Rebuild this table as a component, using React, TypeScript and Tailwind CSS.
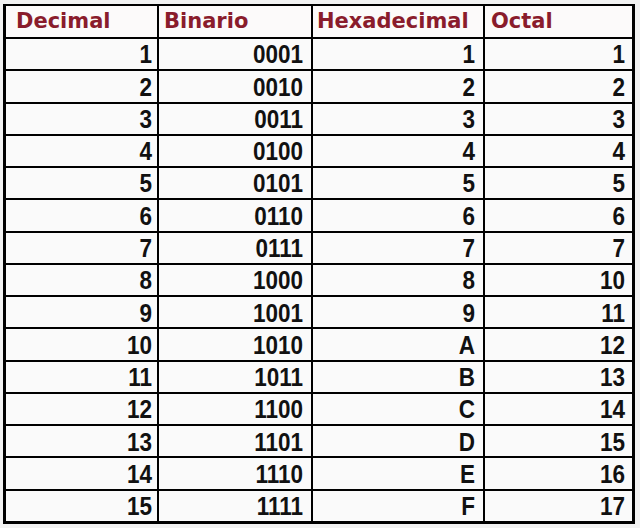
import React from "react";

const rows = [
  ["1", "0001", "1", "1"],
  ["2", "0010", "2", "2"],
  ["3", "0011", "3", "3"],
  ["4", "0100", "4", "4"],
  ["5", "0101", "5", "5"],
  ["6", "0110", "6", "6"],
  ["7", "0111", "7", "7"],
  ["8", "1000", "8", "10"],
  ["9", "1001", "9", "11"],
  ["10", "1010", "A", "12"],
  ["11", "1011", "B", "13"],
  ["12", "1100", "C", "14"],
  ["13", "1101", "D", "15"],
  ["14", "1110", "E", "16"],
  ["15", "1111", "F", "17"],
];

const headers = [
  { label: "Decimal", pad: "pl-[10px]" },
  { label: "Binario", pad: "pl-[5px]" },
  { label: "Hexadecimal", pad: "pl-[4px]" },
  { label: "Octal", pad: "pl-[6px]" },
];

export default function App() {
  return (
    <div className="w-[640px] h-[528px] bg-[#f2f2f2] pt-[4px] pl-[3px]">
      <div className="w-[632px] h-[520px] border-[3px] border-t-[2px] border-black bg-black">
        <div className="grid h-full grid-cols-[151px_152px_170px_147px] grid-rows-[31px_repeat(15,minmax(0,1fr))] gap-[2px]">
          {headers.map((h) => (
            <div
              key={h.label}
              className={`flex items-center bg-[#fcfafa] ${h.pad} font-['DejaVu_Sans',sans-serif] text-[21px] font-bold leading-none text-[#8a1c2c]`}
            >
              {h.label}
            </div>
          ))}
          {rows.map((r) =>
            r.map((v, i) => (
              <div
                key={r[0] + "-" + i}
                className={`flex items-center justify-end bg-[#fafafa] pt-[3px] ${
                  i === 0 ? "pr-[5px]" : i === 3 ? "pr-[7px]" : "pr-[8px]"
                }`}
              >
                <span className="inline-block origin-center scale-y-[1.12] font-['Liberation_Sans',Arial,sans-serif] text-[22.5px] font-bold leading-none text-[#111]">
                  {v}
                </span>
              </div>
            ))
          )}
        </div>
      </div>
    </div>
  );
}
